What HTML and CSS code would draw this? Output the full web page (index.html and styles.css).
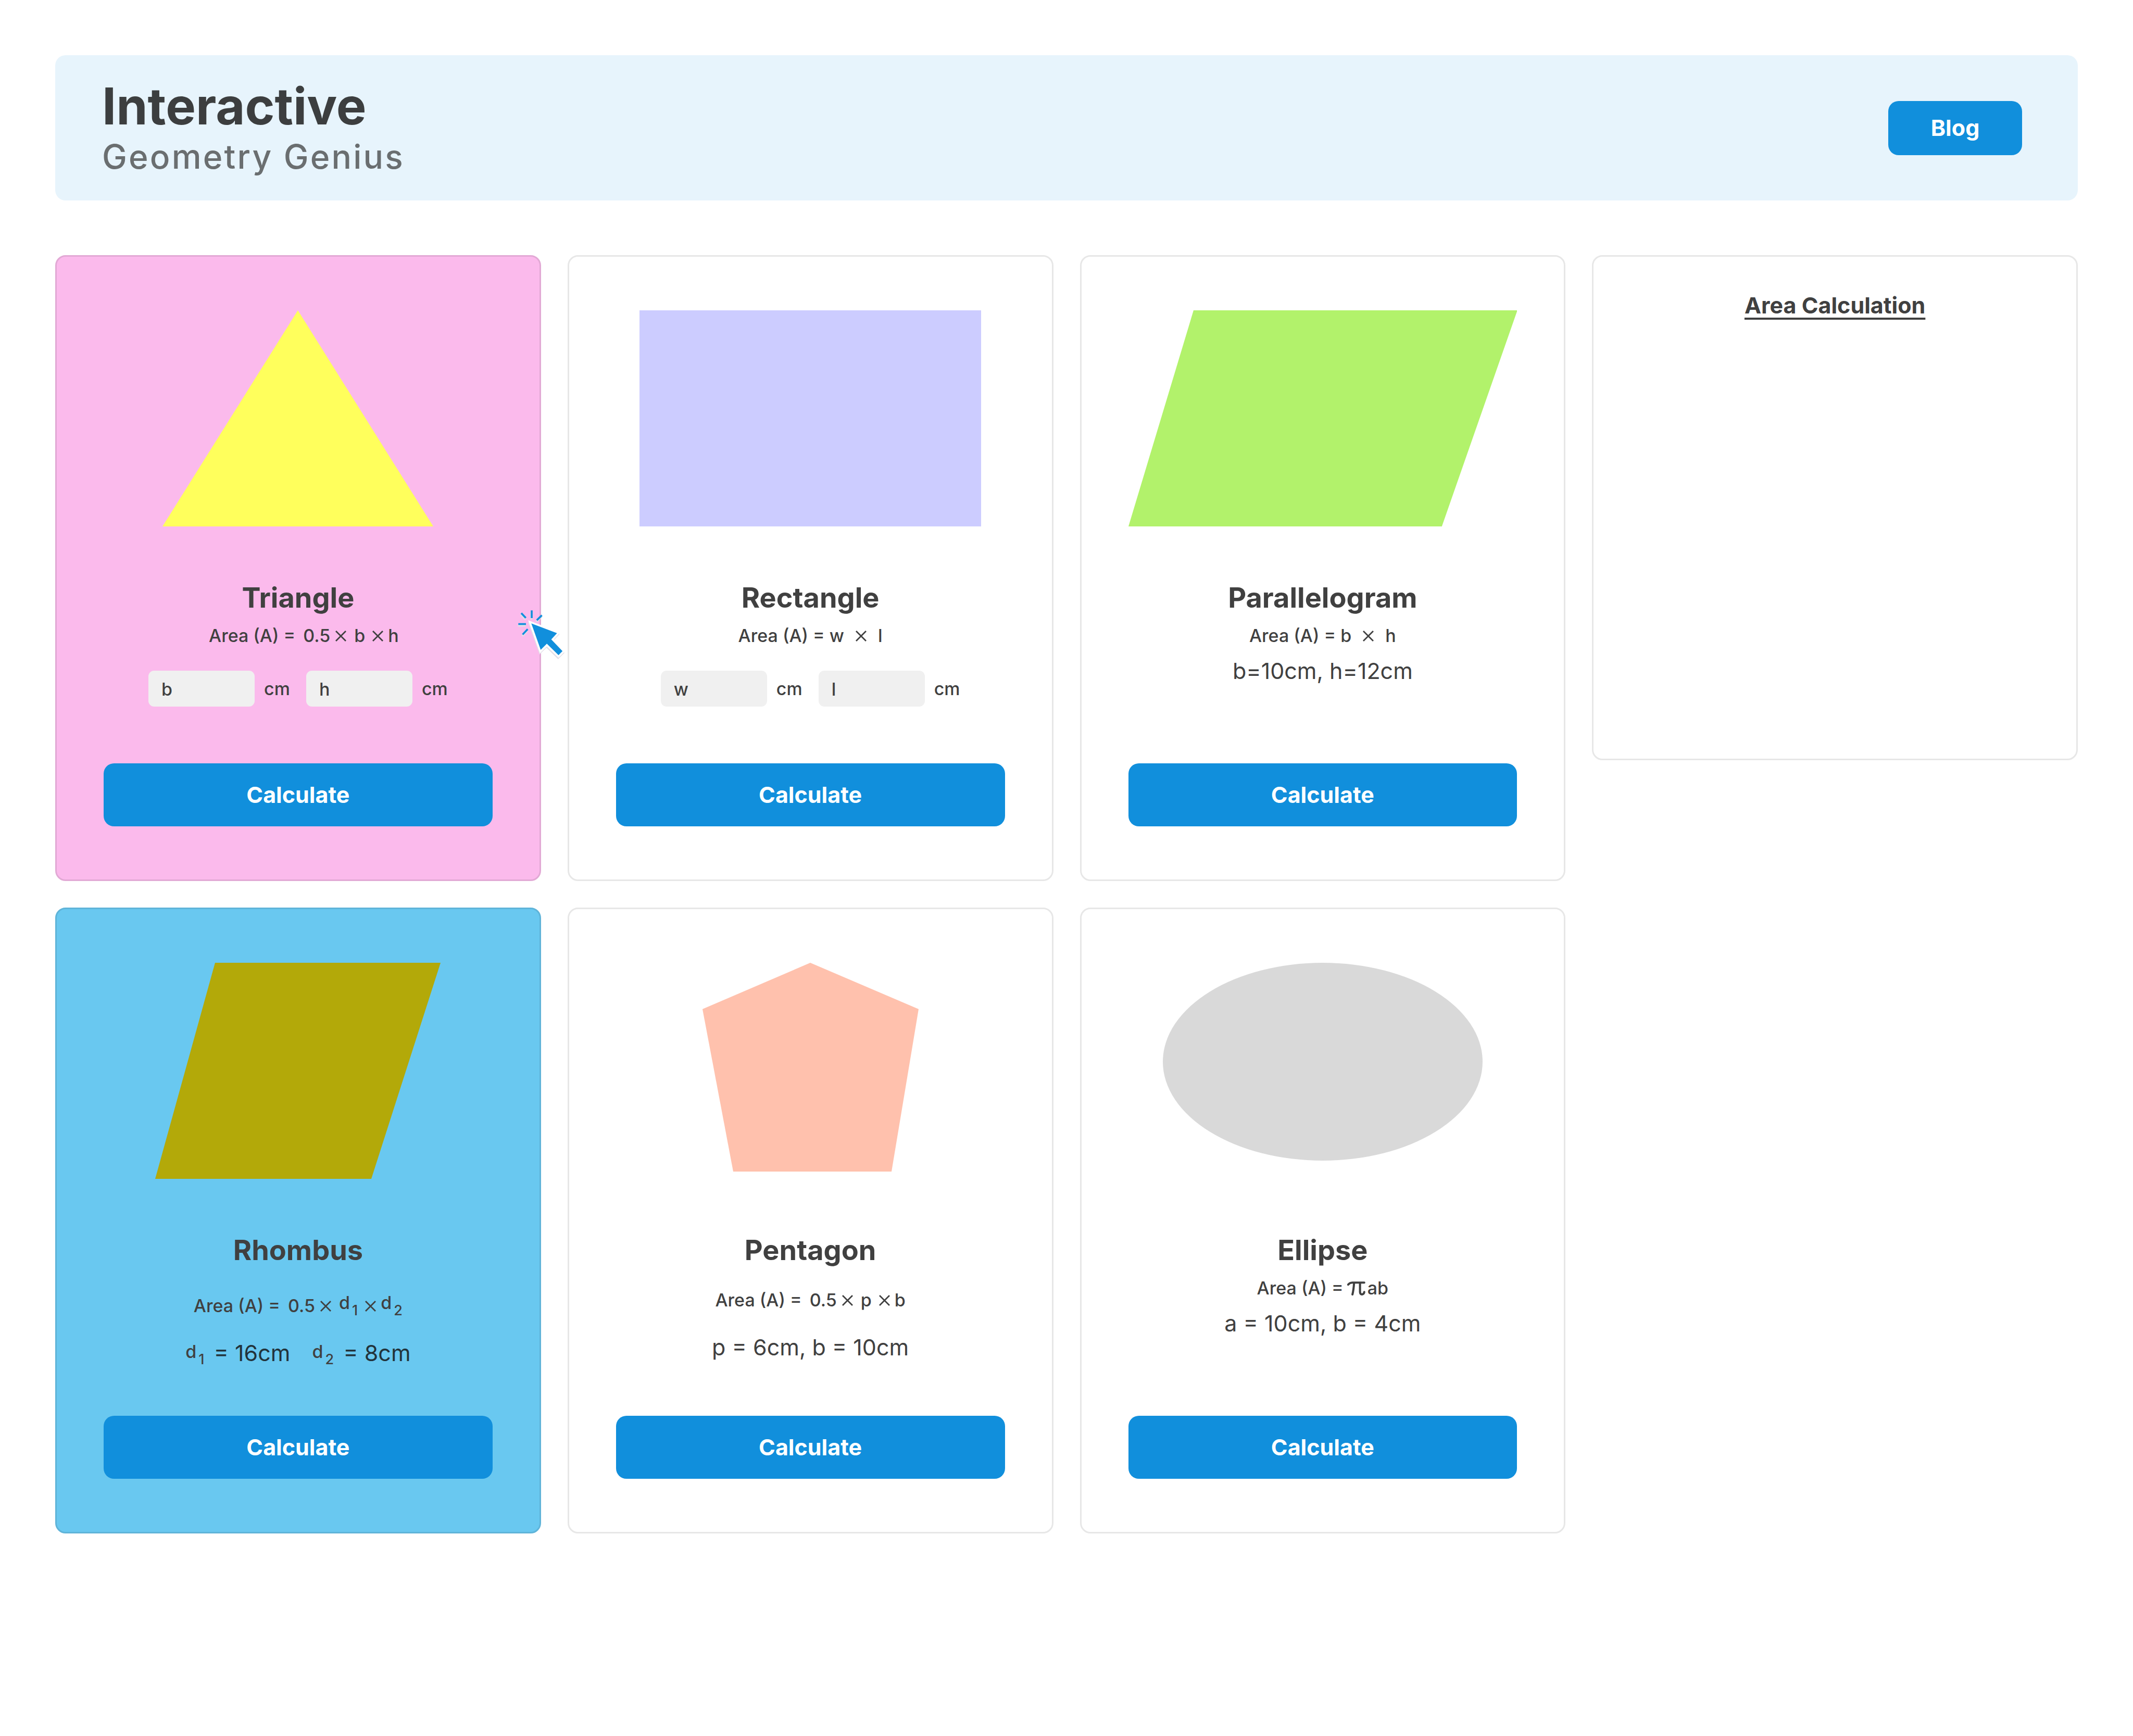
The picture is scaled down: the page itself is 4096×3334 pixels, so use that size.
FILE: index.html
```html
<!DOCTYPE html>
<html lang="en">
<head>
  <meta charset="utf-8">
  <meta name="viewport" content="width=device-width, initial-scale=1">
  <title>Interactive Geometry Genius</title>
  <link rel="stylesheet" href="styles.css">
</head>
<body>
  <svg class="sprite" aria-hidden="true">
    <symbol id="times" viewBox="0 0 21 21">
      <path d="M1 1 20 20M20 1 1 20" fill="none" stroke="currentColor" stroke-width="2.8"/>
    </symbol>
  </svg>

  <header class="header">
    <div class="titles">
      <h1 class="brand">Interactive</h1>
      <p class="tagline">Geometry Genius</p>
    </div>
    <button class="button button-blog" type="button">Blog</button>
  </header>

  <main class="grid">
    <article class="card card-pink">
      <div class="figure">
        <svg width="520" height="415" viewBox="0 0 520 415"><path d="M260 0 520 415H0Z" fill="#ffff5c"/></svg>
      </div>
      <div class="body">
        <h2 class="name">Triangle</h2>
        <p class="formula formula-indent">Area (A) =<span class="factor">0.5</span><svg class="times"><use href="#times"/></svg>b<svg class="times times-next"><use href="#times"/></svg>h</p>
        <div class="fields">
          <label class="field"><input class="input" type="text" placeholder="b" aria-label="Base">cm</label>
          <label class="field"><input class="input" type="text" placeholder="h" aria-label="Height">cm</label>
        </div>
      </div>
      <button class="button button-wide" type="button">Calculate</button>
      <svg class="pointer" viewBox="0 0 420 420" aria-hidden="true">
        <g transform="translate(-3 12)" fill="#e3dfe7" stroke="#e3dfe7">
          <path d="M145 145 337 218 294 264 378 352 348 382 261 297 215 342Z" stroke-width="26"/>
          <path d="M148 48V105M70 68 104 104M224 84 186 121M48 150H105M118 188 80 228" stroke-width="14"/>
        </g>
        <path d="M145 145 337 218 294 264 378 352 348 382 261 297 215 342Z" fill="#118fdc" stroke="#fff" stroke-width="28"/>
        <path d="M145 145 337 218 294 264 378 352 348 382 261 297 215 342Z" fill="#118fdc"/>
        <path d="M148 48V105M70 68 104 104M224 84 186 121M48 150H105M118 188 80 228" fill="none" stroke="#118fdc" stroke-width="14"/>
      </svg>
    </article>

    <article class="card">
      <div class="figure">
        <svg width="656" height="415" viewBox="0 0 656 415"><path d="M0 0H656V415H0Z" fill="#ccccff"/></svg>
      </div>
      <div class="body">
        <h2 class="name">Rectangle</h2>
        <p class="formula">Area (A) = w<svg class="times times-wide"><use href="#times"/></svg>l</p>
        <div class="fields">
          <label class="field"><input class="input" type="text" placeholder="w" aria-label="Width">cm</label>
          <label class="field"><input class="input" type="text" placeholder="l" aria-label="Length">cm</label>
        </div>
      </div>
      <button class="button button-wide" type="button">Calculate</button>
    </article>

    <article class="card">
      <div class="figure">
        <svg width="747" height="415" viewBox="0 0 747 415"><path d="M125 0H747L602 415H0Z" fill="#b2f26b"/></svg>
      </div>
      <div class="body">
        <h2 class="name">Parallelogram</h2>
        <p class="formula">Area (A) = b<svg class="times times-wide"><use href="#times"/></svg>h</p>
        <p class="values">b=10cm, h=12cm</p>
      </div>
      <button class="button button-wide" type="button">Calculate</button>
    </article>

    <aside class="results">
      <h2 class="results-title">Area Calculation</h2>
    </aside>

    <article class="card card-blue">
      <div class="figure">
        <svg width="548" height="415" viewBox="0 0 548 415"><path d="M115 0H548L415 415H0Z" fill="#b3a909"/></svg>
      </div>
      <div class="body body-loose">
        <h2 class="name">Rhombus</h2>
        <p class="formula formula-low">Area (A) =<span class="factor">0.5</span><svg class="times"><use href="#times"/></svg><span class="raised">d</span><span class="index">1</span><svg class="times times-next"><use href="#times"/></svg><span class="raised">d</span><span class="index">2</span></p>
        <p class="values values-dark"><span class="term"><span class="raised">d</span><span class="index">1</span></span> = 16cm<span class="term term-next"><span class="raised">d</span><span class="index">2</span></span> = 8cm</p>
      </div>
      <button class="button button-wide" type="button">Calculate</button>
    </article>

    <article class="card">
      <div class="figure">
        <svg width="415" height="415" viewBox="0 0 415 415"><path d="M207 0 415 89 363 401H59L0 89Z" fill="#ffc1ad"/></svg>
      </div>
      <div class="body body-loose">
        <h2 class="name">Pentagon</h2>
        <p class="formula">Area (A) =<span class="factor">0.5</span><svg class="times"><use href="#times"/></svg>p<svg class="times times-next"><use href="#times"/></svg>b</p>
        <p class="values">p = 6cm, b = 10cm</p>
      </div>
      <button class="button button-wide" type="button">Calculate</button>
    </article>

    <article class="card">
      <div class="figure">
        <svg width="614" height="415" viewBox="0 0 614 415"><ellipse cx="307" cy="190" rx="307" ry="190" fill="#d9d9d9"/></svg>
      </div>
      <div class="body">
        <h2 class="name">Ellipse</h2>
        <p class="formula">Area (A) =<svg class="pi" viewBox="80 80 136 106" role="img" aria-label="pi"><path d="M87 104Q98 90 118 89H208" fill="none" stroke="currentColor" stroke-width="16" stroke-linecap="round"/><path d="M131 92Q128 142 119 178M176 92V160Q177 178 191 178 206 177 208 160" fill="none" stroke="currentColor" stroke-width="16" stroke-linecap="round"/></svg>ab</p>
        <p class="values">a = 10cm, b = 4cm</p>
      </div>
      <button class="button button-wide" type="button">Calculate</button>
    </article>
  </main>
</body>
</html>
```
FILE: styles.css
```css
* {
  box-sizing: border-box;
}

body {
  margin: 0;
  padding: 106px;
  background: #fff;
  color: #404040;
  font-family: Inter, "Liberation Sans", sans-serif;
}

h1,
h2,
p {
  margin: 0;
}

.sprite {
  position: absolute;
  width: 0;
  height: 0;
}

.header {
  display: flex;
  align-items: center;
  justify-content: space-between;
  padding: 40px 107px 40px 90px;
  margin-bottom: 105px;
  border-radius: 20px;
  background: #e7f4fc;
}

.titles {
  padding-bottom: 5px;
}

.brand {
  color: #3c3e3f;
  font-size: 97px;
  font-weight: 700;
  line-height: 116px;
}

.tagline {
  color: #6a6e70;
  font-size: 64px;
  font-weight: 500;
  line-height: 78px;
  letter-spacing: 0.05em;
}

.button {
  padding: 0 0 2px;
  border: 0;
  border-radius: 20px;
  background: #118fdc;
  color: #fff;
  font: 700 43px/52px Inter, "Liberation Sans", sans-serif;
  cursor: pointer;
}

.button-blog {
  width: 257px;
  height: 104px;
}

.button-wide {
  width: 100%;
  height: 121px;
}

.grid {
  display: grid;
  grid-template-columns: repeat(4, minmax(0, 1fr));
  gap: 51px;
  align-items: start;
}

.card {
  position: relative;
  padding: 103px 90px 102px;
  border: 3px solid #e7e7e7;
  border-radius: 20px;
}

.card-pink {
  border-color: #e2a9d5;
  background: #fbbaec;
}

.card-blue {
  border-color: #5fb4d9;
  background: #69c8f0;
}

.figure {
  display: flex;
  justify-content: center;
}

.figure svg {
  display: block;
  max-width: 100%;
}

.body {
  display: flex;
  flex-direction: column;
  align-items: center;
  gap: 20px;
  min-height: 455px;
  padding-top: 105px;
}

.body-loose {
  gap: 43px;
}

.name {
  font-size: 54px;
  font-weight: 700;
  line-height: 64px;
}

.formula {
  font-size: 34px;
  font-weight: 500;
  line-height: 42px;
  white-space: nowrap;
}

.formula-indent {
  padding-left: 22px;
}

.formula-low {
  margin-top: 11px;
}

.factor {
  margin-left: 15px;
}

.times {
  width: 21px;
  height: 21px;
  margin: 0 15px 0 10px;
  vertical-align: 1px;
}

.times-next {
  margin: 0 9px 0 14px;
}

.times-wide {
  margin: 0 22px;
}

.pi {
  width: 35px;
  height: 27px;
  margin: 0 4px 0 7px;
  vertical-align: -2px;
}

.raised {
  line-height: 0;
  vertical-align: 6px;
}

.index {
  margin-left: 4px;
  font-size: 27px;
  line-height: 0;
  vertical-align: -6px;
}

.values {
  font-size: 43px;
  line-height: 52px;
  white-space: nowrap;
}

.values-dark {
  color: #22333b;
}

.term {
  margin-right: 6px;
  color: #404040;
  font-size: 34px;
  font-weight: 500;
}

.term-next {
  margin-left: 42px;
}

.fields {
  display: flex;
  gap: 31px;
  padding-top: 26px;
}

.field {
  display: flex;
  align-items: center;
  gap: 18px;
  font-size: 34px;
  font-weight: 500;
  line-height: 42px;
}

.input {
  width: 204px;
  height: 69px;
  padding: 2px 25px 0;
  border: 0;
  border-radius: 11px;
  background: #f0f0f0;
  color: #404040;
  font: 500 34px/42px Inter, "Liberation Sans", sans-serif;
}

.input::placeholder {
  color: #404040;
  opacity: 1;
}

.pointer {
  position: absolute;
  top: 667px;
  right: -55px;
  width: 108px;
  height: 108px;
}

.results {
  grid-column: 4;
  grid-row: 1;
  min-height: 970px;
  padding: 67px 90px;
  border: 3px solid #e7e7e7;
  border-radius: 20px;
}

.results-title {
  font-size: 43px;
  font-weight: 700;
  line-height: 52px;
  text-align: center;
  text-decoration: underline;
  text-decoration-thickness: 4px;
  text-underline-offset: 8px;
  text-decoration-skip-ink: none;
}
```
